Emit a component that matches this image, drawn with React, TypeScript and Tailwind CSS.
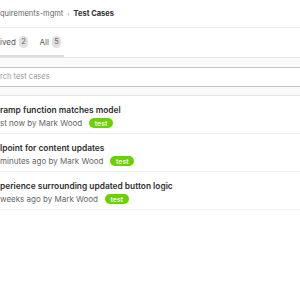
import React from "react";

const items = [
  { title: "ramp function matches model", meta: "st now by Mark Wood" },
  { title: "lpoint for content updates", meta: "minutes ago by Mark Wood" },
  { title: "perience surrounding updated button logic", meta: "weeks ago by Mark Wood" },
];

export default function App() {
  return (
    <div
      className="w-[300px] h-[300px] overflow-hidden bg-white text-[#303030]"
      style={{ fontFamily: "Inter, 'Liberation Sans', sans-serif" }}
    >
      <div className="h-[28px] flex items-center border-b border-[#ececec] text-[7.5px] whitespace-nowrap">
        <span className="text-[#666]">quirements-mgmt</span>
        <span className="mx-[4px] text-[#999] text-[6px]">›</span>
        <span className="font-bold text-[#303030]">Test Cases</span>
      </div>
      <div className="h-[30px] border-b border-[#e5e5e5] whitespace-nowrap">
        <div className="h-full w-[64px] flex items-center border-b-2 border-[#dbdbdb] text-[8px] text-[#555]">
          <div className="flex items-center gap-[3px]">
            <span>ived</span>
            <span className="bg-[#e0e0e0] rounded-full px-[2.5px] h-[12px] flex items-center text-[7.5px] text-[#666]">2</span>
          </div>
          <div className="flex items-center gap-[3px] ml-[11px]">
            <span>All</span>
            <span className="bg-[#e0e0e0] rounded-full px-[2.5px] h-[12px] flex items-center text-[7.5px] text-[#666]">5</span>
          </div>
        </div>
      </div>
      <div className="h-[38px] bg-[#fafafa] border-b border-[#e5e5e5] flex items-center">
        <div className="w-full h-[20px] bg-white border-y border-[#c4c4c4] flex items-center text-[7.5px] text-[#999]">
          rch test cases
        </div>
      </div>
      {items.map((it, i) => (
        <div key={i} className="h-[38px] border-b border-[#f0f0f0] flex flex-col pt-[8.5px] gap-[2px] whitespace-nowrap">
          <div className="text-[8.4px] font-semibold text-[#303030] leading-[11px]">{it.title}</div>
          <div className="flex items-center gap-[7px] text-[8px] text-[#666] leading-[11px]">
            <span>{it.meta}</span>
            <span className="bg-[#69d100] text-white font-medium rounded-full px-[5.5px] h-[10px] flex items-center text-[7px]">test</span>
          </div>
        </div>
      ))}
    </div>
  );
}
